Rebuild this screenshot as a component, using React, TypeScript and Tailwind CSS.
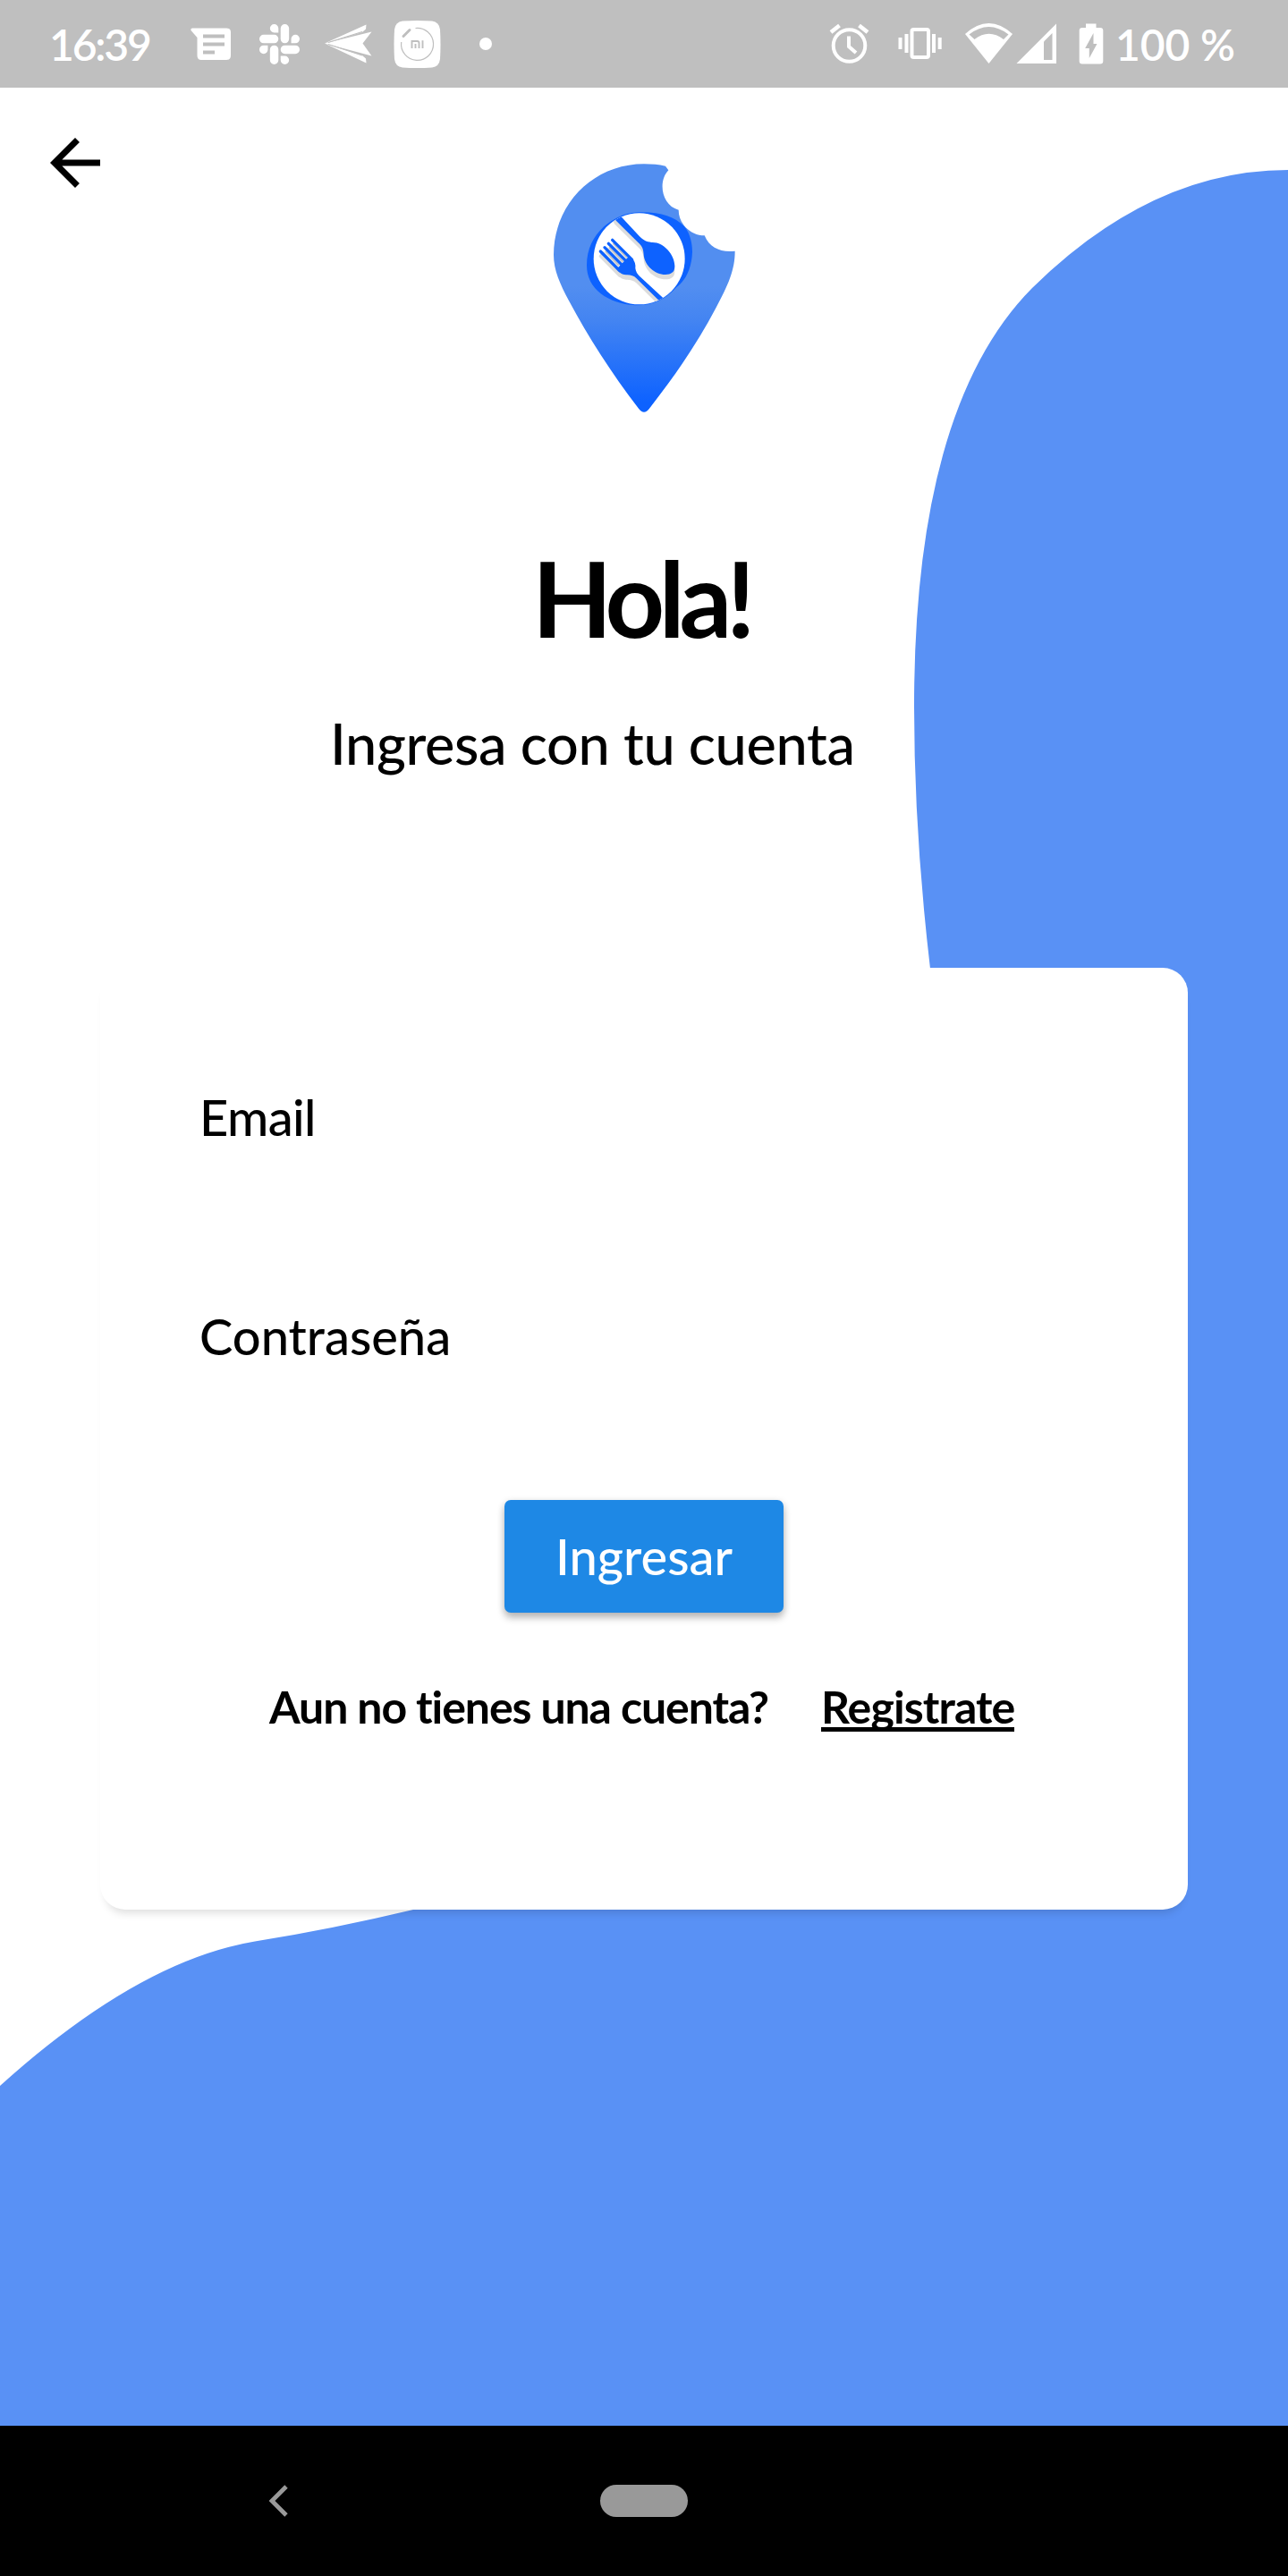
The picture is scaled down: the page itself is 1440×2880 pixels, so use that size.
import { SiSlack } from "react-icons/si";

function MessageIcon() {
  return (
    <svg className="mt-[31px] ml-[41px] h-[37px] w-[46px] shrink-0" viewBox="0 0 46 37" fill="#fff">
      <path fillRule="evenodd" d="M2 0.5H40Q45 0.5 45 5V31Q45 36 40 36H12Q7.5 36 7.5 31V11L0.5 3Q0 0.5 2 0.5ZM14 7.5V11.5H38V7.5ZM14 16.5V20.5H38V16.5ZM14 25.5V29.5H27V25.5Z" />
    </svg>
  );
}

function SendIcon() {
  return (
    <svg className="mt-[26px] ml-[28px] h-[46px] w-[53px] shrink-0" viewBox="0 0 53 46" fill="#fff">
      <path d="M0 22.500L46.500 1.500L46 6.500L42 10Z" />
      <path d="M0 22.500L52.500 9.500L42.500 22.500L52.500 36.500Z" />
      <path d="M0 22.500L46.500 44.500L46 39.500L42 36Z" />
      <path d="M4 21.500L42 9.500M4 23.500L42 36" stroke="#bfbfbf" strokeWidth="1.300" fill="none" />
    </svg>
  );
}

function MiIcon() {
  return (
    <svg className="mt-[23px] ml-[24px] h-[53px] w-[53px] shrink-0" viewBox="0 0 53 53" fill="none">
      <path d="M10 0.500Q26.500-0.500 43 0.500Q51 1.500 52 10Q53 26.500 52 43Q51 51.500 43 52.500Q26.500 53.500 10 52.500Q2 51.500 1 43Q0 26.500 1 10Q2 1.500 10 0.500Z" fill="#fff" />
      <path d="M24.500 8.500A18 18 0 1 1 8.700 24" stroke="#bfbfbf" strokeWidth="1.200" />
      <path d="M11 17.500L18 10.500" stroke="#bfbfbf" strokeWidth="3" strokeLinecap="round" />
      <path d="M20.500 31V23H26.500Q28.500 23 28.500 25V31M24.500 26V31M32.500 22.300V31" stroke="#bfbfbf" strokeWidth="1.900" />
    </svg>
  );
}

function AlarmIcon() {
  return (
    <svg className="mt-[26px] h-[46px] w-[45px] shrink-0" viewBox="0 0 45 46" fill="none" stroke="#fff">
      <circle cx="22.500" cy="25" r="17.800" strokeWidth="4" />
      <path d="M2 10L11.500 2.500M43 10L33.500 2.500" strokeWidth="4.500" />
      <path d="M22 14.500V26L30 33" strokeWidth="4" />
    </svg>
  );
}

function VibrateIcon() {
  return (
    <svg className="mt-[30px] ml-[32px] h-[37px] w-[50px] shrink-0" viewBox="0 0 50 37" fill="none" stroke="#fff" strokeWidth="4">
      <rect x="15.500" y="3" width="18.500" height="31" rx="2" />
      <path d="M2.500 12V25M9.500 8V29M40 8V29M46.700 12V25" />
    </svg>
  );
}

function SignalIcons() {
  return (
    <svg className="mt-[26px] ml-[25px] h-[46px] w-[103px] shrink-0" viewBox="0 0 103 46">
      <path d="M0 12Q26.500-12 53 12L26.500 45Z" fill="#fff" />
      <path d="M4.500 12.500Q26.500-4.500 48.500 12.500L43 18Q26.500 5.500 10.500 18Z" fill="#bfbfbf" />
      <path d="M57.500 45L102 0.500V45Z" fill="#fff" />
      <path d="M88 20.500L97.500 11V41H88Z" fill="#bfbfbf" />
    </svg>
  );
}

function BatteryIcon() {
  return (
    <svg className="mt-[26px] ml-[24px] h-[46px] w-[28px] shrink-0" viewBox="0 0 28 46">
      <path d="M8 0.500H19.500V5H24Q27.300 5 27.300 8V42.500Q27.300 45.500 24 45.500H4Q0.700 45.500 0.700 42.500V8Q0.700 5 4 5H8Z" fill="#fff" />
      <path d="M16.500 11L7.200 28H11.800V39L20.500 23H16.500Z" fill="#bfbfbf" />
    </svg>
  );
}

function StatusBar() {
  return (
    <div className="flex h-[98px] shrink-0 items-start bg-[#bfbfbf] text-[48px] leading-[99px] font-semibold text-white">
      <span className="ml-[55px] w-[117px] tracking-[-2.2px]">16:39</span>
      <MessageIcon />
      <SiSlack className="mt-[27px] ml-[31px] size-[45px] shrink-0" />
      <SendIcon />
      <MiIcon />
      <span className="mt-[42px] ml-[43px] size-[14px] shrink-0 rounded-full bg-white" />
      <span className="grow" />
      <AlarmIcon />
      <VibrateIcon />
      <SignalIcons />
      <BatteryIcon />
      <span className="ml-[13px] w-[193px] tracking-[-0.1px]">100 %</span>
    </div>
  );
}

function Backdrop() {
  return (
    <svg className="absolute inset-0 h-full w-full" viewBox="0 98 1440 2614" preserveAspectRatio="none">
      <path
        fill="#5991f5"
        d="M1440 190Q1288 190 1154 322Q1022 455 1022 790Q1022 930 1040 1083V1200L1300 2000L462 2135Q370 2157 285 2170.500Q155 2192 0 2332V2712H1440Z"
      />
    </svg>
  );
}

function Logo() {
  return (
    <svg className="mt-[72px] h-[300px] w-[240px] justify-self-center" viewBox="0 0 720 900">
      <defs>
        <linearGradient id="pin" x1="0" y1="450" x2="0" y2="840" gradientUnits="userSpaceOnUse">
          <stop offset="0" stopColor="#528ef0" />
          <stop offset="0.300" stopColor="#4384f2" />
          <stop offset="1" stopColor="#0d62ff" />
        </linearGradient>
        <clipPath id="plate">
          <circle cx="344" cy="358" r="153" />
        </clipPath>
        <g id="cutlery">
          <path d="M240 188L270 185L285 218L345 283C358 296 368 301 385 303C425 300 465 345 463 385C463 403 450 411 432 411C395 411 362 380 359 345C358 325 354 316 340 303L262 226Z" />
          <path d="M268 392L306 353L322 360Q333 370 331 390Q333 405 345 416L440 504L420 508L334 423Q322 411 300 412Q287 412 277 402Z" />
          <path
            fill="none"
            strokeWidth="10"
            strokeLinecap="round"
            d="M214 333L278 398M228 320L290 383M241 307L305 371M254 295L320 361"
          />
        </g>
      </defs>
      <path
        fill="url(#pin)"
        d="M432 47Q400 40 360 40C190 40 57 175 57 345C57 395 78 443 109 500C172 618 250 740 342 860Q360 884 378 860C472 740 545 630 600 525C643 445 665 395 665 332C620 338 580 322 563 280C515 280 476 240 476 194C420 180 405 100 442 61Z"
      />
      <path
        fill="#0d62ff"
        d="M345 202C425 200 480 225 503 260C515 280 522 305 522 335C520 390 500 430 470 452C430 495 390 515 330 514C240 507 168 460 168 380C168 310 205 260 250 232C280 212 310 203 345 202Z"
      />
      <circle cx="344" cy="358" r="153" fill="#fff" />
      <g clipPath="url(#plate)">
        <use href="#cutlery" y="16" fill="#dcdcdc" stroke="#dcdcdc" strokeWidth="0" />
        <g stroke="#fff" strokeWidth="5" strokeLinecap="round">
          <path d="M221 326L284 391M235 313L297 377M248 301L311 366" />
        </g>
        <g stroke="#c4c4c4" strokeWidth="6" strokeLinecap="round">
          <path d="M216 343L272 399" stroke="#dcdcdc" />
          <path d="M232 334L274 379M245 321L288 366M258 308L301 353" />
        </g>
        <g fill="#0d62ff" stroke="#0d62ff" strokeWidth="0">
          <use href="#cutlery" />
        </g>
      </g>
    </svg>
  );
}

function LoginCard() {
  return (
    <section className="mx-[112px] mt-[213.5px] flex h-[1053.5px] flex-col rounded-[28px] bg-white pt-[132px] shadow-[0_10px_10px_-6px_rgba(0,0,0,0.13)]">
      <label className="pl-[111px] text-[56px] leading-[69px] font-medium tracking-[-0.6px]">Email</label>
      <label className="mt-[176px] pl-[111px] text-[56px] leading-[69px] font-medium">Contraseña</label>
      <button className="mt-[149px] h-[126px] w-[312px] self-center rounded-[7px] bg-[#1e88e5] text-[56px] leading-[124px] font-medium text-white shadow-[0_6px_8px_rgba(0,0,0,0.22),0_2px_8px_rgba(0,0,0,0.14)]">
        Ingresar
      </button>
      <div className="mt-[75px] flex pl-[189px] text-[50px] leading-[60px] font-bold">
        <span className="w-[617px] tracking-[-1.1px]">Aun no tienes una cuenta?</span>
        <a className="h-[58px] border-b-[5px] border-black tracking-[-0.9px]">Registrate</a>
      </div>
    </section>
  );
}

function NavigationBar() {
  return (
    <div className="flex h-[168px] shrink-0 items-center bg-black">
      <svg className="ml-[300px] h-[36px] w-[23px]" viewBox="0 0 23 36" fill="none" stroke="#999" strokeWidth="4.800">
        <path d="M20 2L4 18L20 34" />
      </svg>
      <span className="ml-[348px] h-[36px] w-[98px] rounded-full bg-[#999]" />
    </div>
  );
}

export default function App() {
  return (
    <div className="flex h-[2880px] w-[1440px] flex-col overflow-hidden bg-white font-['Lato',sans-serif] text-black">
      <StatusBar />
      <main className="relative h-[2614px] shrink-0">
        <Backdrop />
        <div className="relative flex flex-col">
          <header className="grid grid-cols-3 items-start">
            <svg className="mt-[42px] ml-[42px] size-[84px]" viewBox="0 0 24 24">
              <path d="M20 11H7.830l5.590-5.590L12 4l-8 8 8 8 1.410-1.410L7.830 13H20v-2z" />
            </svg>
            <Logo />
          </header>
          <h1 className="mt-[139px] pl-[595px] text-[116px] leading-[120px] font-bold tracking-[-6.2px]">Hola!</h1>
          <p className="mt-[63px] pl-[369px] text-[63px] leading-[78px] font-medium tracking-[-0.35px]">Ingresa con tu cuenta</p>
          <div className="-mt-[2px]">
            <LoginCard />
          </div>
        </div>
      </main>
      <NavigationBar />
    </div>
  );
}
